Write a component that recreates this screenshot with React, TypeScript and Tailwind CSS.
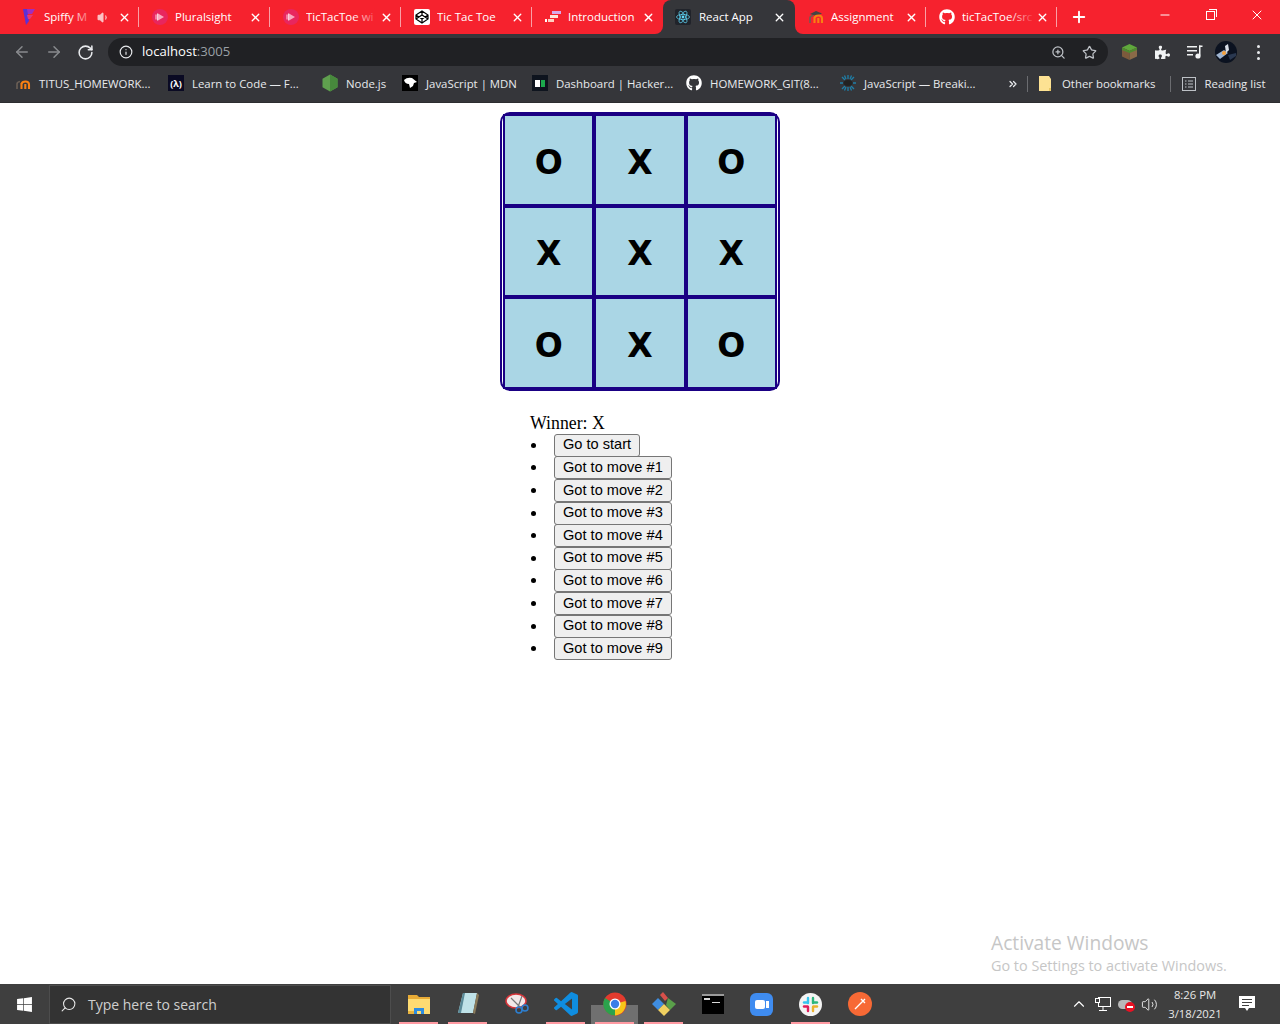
import { ArrowLeft, ArrowRight, ChevronUp, ChevronsRight, Info, Minus, Plus, RotateCw, Search, Star, Volume1, Volume2, X, ZoomIn } from 'lucide-react'
import { FaGithub, FaPuzzlePiece, FaWindows } from 'react-icons/fa'

const ui = "font-['Open_Sans','Noto_Sans',sans-serif]"

function PluralsightIcon() {
    return (
        <svg width="16" height="16" viewBox="0 0 16 16">
            <circle cx="8" cy="8" r="8" fill="#e8265e" />
            <path d="M6 4.5 L12 8 L6 11.5 Z" fill="#f9a8c0" />
            <path d="M4 5.5 V10.5 M5.5 4.5 V11.5" stroke="#fbd0dc" strokeWidth="1" />
        </svg>
    )
}

function SpiffyIcon() {
    return (
        <svg width="16" height="18" viewBox="0 0 16 18">
            <path d="M2 1 H14 L11 6 H5 Z" fill="#a02ec0" />
            <path d="M2 1 L5 17 L8 13 L6 1 Z" fill="#5b30d8" />
            <path d="M6 7 H12 L9 11 H7 Z" fill="#e23a78" />
        </svg>
    )
}

function CodepenIcon() {
    return (
        <svg width="16" height="16" viewBox="0 0 16 16">
            <rect width="16" height="16" rx="2" fill="#fff" />
            <path d="M8 2 L14 6 V10 L8 14 L2 10 V6 Z M2 6 L8 10 L14 6 M2 10 L8 6 L14 10 M8 2 V6 M8 10 V14" fill="none" stroke="#000" strokeWidth="1.2" />
        </svg>
    )
}

function StairsIcon() {
    return (
        <svg width="16" height="12" viewBox="0 0 16 12">
            <rect x="7" y="0" width="9" height="3" fill="#d9a8e8" />
            <rect x="5" y="4" width="8" height="3" fill="#ffe2d8" />
            <rect x="3" y="8" width="6" height="3" fill="#ffd0c0" />
            <rect x="0" y="8" width="2" height="3" fill="#fff" />
        </svg>
    )
}

function ReactIcon() {
    return (
        <svg width="16" height="16" viewBox="0 0 16 16">
            <rect width="16" height="16" rx="2" fill="#20232a" />
            <circle cx="8" cy="8" r="1.4" fill="#61dafb" />
            <g fill="none" stroke="#61dafb" strokeWidth="0.7">
                <ellipse cx="8" cy="8" rx="6.5" ry="2.6" />
                <ellipse cx="8" cy="8" rx="6.5" ry="2.6" transform="rotate(60 8 8)" />
                <ellipse cx="8" cy="8" rx="6.5" ry="2.6" transform="rotate(120 8 8)" />
            </g>
        </svg>
    )
}

function MoodleIcon({ cap = false }: { cap?: boolean }) {
    return (
        <svg width="16" height="14" viewBox="0 0 16 14">
            {cap && <path d="M2 4 L8 1 L14 3.5 L8 6 Z" fill="#444" />}
            <path d="M2 13 V8 Q2 6 5 5.5" fill="none" stroke="#6b5f55" strokeWidth="1.6" />
            <path d="M6.5 13 V7 M6.5 8 Q7 5.5 10.5 5.5 Q14 5.5 14 8.5 V13 M10.3 13 V8" fill="none" stroke="#f98012" strokeWidth="2.1" />
        </svg>
    )
}

function FccIcon() {
    return (
        <div className="flex h-4 w-4 items-center justify-center bg-[#0a0a23] text-[9px] font-bold text-white">
            (λ)
        </div>
    )
}

function NodeIcon() {
    return (
        <svg width="16" height="18" viewBox="0 0 16 18">
            <path d="M8 0.5 L15.5 4.7 V13.3 L8 17.5 L0.5 13.3 V4.7 Z" fill="#5fa04e" />
            <path d="M8 0.5 L15.5 4.7 V13.3 L8 17.5 Z" fill="#47893c" />
        </svg>
    )
}

function MdnIcon() {
    return (
        <svg width="16" height="16" viewBox="0 0 16 16">
            <rect width="16" height="16" fill="#000" />
            <path d="M2 5 Q5 2 10 3 L15 7 L12 8 L11 11 L8 13 L7 9 Q3 9 2 5 Z" fill="#fff" />
        </svg>
    )
}

function HackerRankIcon() {
    return (
        <div className="flex h-4 w-4 items-center justify-center gap-px bg-[#0e141e]">
            <div className="h-[7px] w-[5px] bg-white" />
            <div className="h-[7px] w-[4px] bg-[#1ba94c]" />
        </div>
    )
}

function CssTricksIcon() {
    return (
        <svg width="16" height="16" viewBox="0 0 16 16">
            <g stroke="#1f7fa8" strokeWidth="1.3">
                <path d="M8 0 V4 M8 12 V16 M0 8 H3 M13 8 H16 M2 2 L5 5 M14 2 L11 5 M2 14 L5 11 M14 14 L11 11 M4.5 0.5 L6 4 M11.5 0.5 L10 4 M4.5 15.5 L6 12 M11.5 15.5 L10 12" />
            </g>
            <ellipse cx="8" cy="8" rx="4.5" ry="3" fill="#222" />
        </svg>
    )
}

function FolderBookmark() {
    return (
        <svg width="13" height="15" viewBox="0 0 13 15">
            <path d="M0 0 H10 V0 L12 3 V15 H0 Z" fill="#fde293" />
            <path d="M10 15 V12 H12 V15 Z" fill="#e8c765" />
        </svg>
    )
}

function ReadingList() {
    return (
        <svg width="14" height="14" viewBox="0 0 14 14" fill="none" stroke="#bdc1c6" strokeWidth="1">
            <rect x="0.5" y="0.5" width="13" height="13" />
            <path d="M3 4 H4.5 M6 4 H11 M3 7 H4.5 M6 7 H11 M3 10 H4.5 M6 10 H11" />
        </svg>
    )
}

function MinecraftBlock() {
    return (
        <svg width="15" height="16" viewBox="0 0 15 16">
            <path d="M7.5 0 L15 3.5 L7.5 7 L0 3.5 Z" fill="#5fa83c" />
            <path d="M0 3.5 L7.5 7 V16 L0 12.5 Z" fill="#7c5a3c" />
            <path d="M15 3.5 L7.5 7 V16 L15 12.5 Z" fill="#8a6a48" />
            <path d="M0 3.5 L7.5 7 L15 3.5 V6 L7.5 9 L0 6 Z" fill="#4d8a30" />
        </svg>
    )
}

function QueueMusic() {
    return (
        <svg width="16" height="14" viewBox="0 0 16 14" fill="#f1f3f4">
            <rect x="0" y="1" width="10" height="1.5" />
            <rect x="0" y="5" width="10" height="1.5" />
            <rect x="0" y="9" width="6" height="1.5" />
            <rect x="12" y="0.5" width="1.5" height="10" />
            <rect x="12" y="0.5" width="3.5" height="1.5" />
            <circle cx="11" cy="11" r="2.6" />
        </svg>
    )
}

function Avatar() {
    return (
        <svg width="22" height="22" viewBox="0 0 22 22">
            <circle cx="11" cy="11" r="11" fill="#0b1220" />
            <path d="M1 14 L9 9 L13 12 L5 18 Z" fill="#9fb4d0" />
            <path d="M10 5 L13 3 L14 9 L11 12 Z" fill="#d9dfe8" />
            <circle cx="9" cy="12" r="2" fill="#f7a13c" />
            <path d="M13 14 L21 12 V15 L15 19 Z" fill="#2a3850" />
        </svg>
    )
}

const tabs = [
    { title: 'Spiffy M', icon: <SpiffyIcon />, sound: true, fade: true, sep: true },
    { title: 'Pluralsight', icon: <PluralsightIcon />, sep: true },
    { title: 'TicTacToe wi', icon: <PluralsightIcon />, fade: true, sep: true },
    { title: 'Tic Tac Toe', icon: <CodepenIcon />, sep: true },
    { title: 'Introduction', icon: <StairsIcon /> },
    { title: 'React App', icon: <ReactIcon />, active: true },
    { title: 'Assignment', icon: <MoodleIcon cap />, sep: true },
    { title: 'ticTacToe/src', icon: <FaGithub className="h-4 w-4 text-white" />, fade: true, sep: true },
]

const bookmarks = [
    { title: 'TITUS_HOMEWORK...', icon: <MoodleIcon />, width: 'w-[153px]' },
    { title: 'Learn to Code — F...', icon: <FccIcon />, width: 'w-[154px]' },
    { title: 'Node.js', icon: <NodeIcon />, width: 'w-[80px]' },
    { title: 'JavaScript | MDN', icon: <MdnIcon />, width: 'w-[130px]' },
    { title: 'Dashboard | Hacker...', icon: <HackerRankIcon />, width: 'w-[154px]' },
    { title: 'HOMEWORK_GIT(8...', icon: <FaGithub className="h-4 w-4 text-white" />, width: 'w-[154px]' },
    { title: 'JavaScript — Breaki...', icon: <CssTricksIcon />, width: 'w-[150px]' },
]

function Tab({ tab }: { tab: (typeof tabs)[number] }) {
    return (
        <div
            className={
                tab.active
                    ? 'relative flex h-[34px] w-[132px] items-center rounded-t-[8px] bg-[#35363a] pl-[12px] pr-[9px]'
                    : 'relative flex h-[34px] w-[131px] items-center pl-[13px] pr-[8px]'
            }
        >
            <div className="flex h-[18px] w-4 shrink-0 items-center justify-center">{tab.icon}</div>
            <div className={`relative min-w-0 flex-1 overflow-hidden whitespace-nowrap text-[11.5px] text-white ${tab.active ? 'ml-[8px]' : 'ml-[7px]'}`}>
                {tab.title}
                {tab.fade && (
                    <div className="absolute inset-y-0 right-0 w-[28px] bg-gradient-to-r from-transparent to-[#f6222e]" />
                )}
            </div>
            {tab.sound && <Volume1 className="mr-[8px] h-[13px] w-[13px] shrink-0 fill-[#fbc4c7] text-[#fbc4c7]" />}
            <X className="h-[13px] w-[13px] shrink-0 text-white" strokeWidth={2.5} />
            {tab.sep && <div className="absolute bottom-[7px] right-0 top-[7px] w-px bg-[#f9a0a6]" />}
            {tab.active && (
                <>
                    <div className="absolute bottom-0 left-[-8px] h-[8px] w-[8px] bg-[#35363a]">
                        <div className="h-full w-full rounded-br-[8px] bg-[#f6222e]" />
                    </div>
                    <div className="absolute bottom-0 right-[-8px] h-[8px] w-[8px] bg-[#35363a]">
                        <div className="h-full w-full rounded-bl-[8px] bg-[#f6222e]" />
                    </div>
                </>
            )}
        </div>
    )
}

function Board() {
    const cells = ['O', 'X', 'O', 'X', 'X', 'X', 'O', 'X', 'O']
    return (
        <div className="mt-[9px] h-[279px] w-[280px] rounded-[10px] border-2 border-[#1a0084] pl-px">
            <div className="grid h-[275px] w-[274px] grid-cols-3 grid-rows-3">
                {cells.map((value, i) => (
                    <div
                        key={i}
                        className="flex items-center justify-center border-2 border-[#1a0084] bg-[#aad6e5] pt-[5px] font-['DejaVu_Sans',sans-serif] text-[33px] font-bold text-black"
                    >
                        {value}
                    </div>
                ))}
            </div>
        </div>
    )
}

function History() {
    const moves = ['Go to start', 'Got to move #1', 'Got to move #2', 'Got to move #3', 'Got to move #4', 'Got to move #5', 'Got to move #6', 'Got to move #7', 'Got to move #8', 'Got to move #9']
    return (
        <div className="mt-[22px] w-[220px] pl-[30px]">
            <div className="font-['Liberation_Serif',serif] text-[17.8px] leading-[21px] text-black">Winner: X</div>
            <ul className="font-['Liberation_Sans',sans-serif] text-[14.6px]">
                {moves.map(label => (
                    <li key={label} className="flex h-[22.6px] items-center">
                        <div className="ml-[1px] h-[5px] w-[5px] rounded-full bg-black" />
                        <button className="ml-[18px] flex h-[23px] items-center rounded-[3px] border border-[#767676] bg-[#efefef] px-2 text-black">
                            {label}
                        </button>
                    </li>
                ))}
            </ul>
        </div>
    )
}

function TaskIcon({ children, running, active }: { children: React.ReactNode; running?: boolean; active?: boolean }) {
    return (
        <div className="relative flex h-[40px] w-[49px] items-center justify-center">
            {active && <div className="absolute inset-x-[1px] bottom-0 h-[19px] bg-[#707070]" />}
            <div className="relative flex items-center justify-center">{children}</div>
            {running && <div className="absolute inset-x-[5px] bottom-0 h-[2px] bg-[#ff9aa2]" />}
        </div>
    )
}

function Taskbar() {
    return (
        <footer className={`flex h-[40px] items-center bg-[#3f3f3f] text-white ${ui}`}>
            <div className="flex w-[49px] items-center justify-center">
                <FaWindows className="h-[17px] w-[17px] text-white" />
            </div>
            <div className="flex h-[39px] w-[342px] items-center border border-[#4d4d4d] bg-[#333333] pl-[10px]">
                <Search className="h-[17px] w-[17px] -scale-x-100 text-[#e8e8e8]" strokeWidth={1.5} />
                <span className="ml-[11px] text-[14px] text-[#cfcfcf]">Type here to search</span>
            </div>
            <div className="ml-[3px] flex">
                <TaskIcon running>
                    <svg width="22" height="19" viewBox="0 0 22 19">
                        <path d="M0 0 H9 L11 2 H22 V19 H0 Z" fill="#e8ab36" />
                        <path d="M0 4 H22 V19 H0 Z" fill="#fddb72" />
                        <path d="M6 19 V13 H16 V19 H13 V16 H9 V19 Z" fill="#2c8ce0" />
                        <rect x="0" y="16" width="6" height="3" fill="#e8b33e" />
                    </svg>
                </TaskIcon>
                <TaskIcon running>
                    <svg width="22" height="24" viewBox="0 0 22 24">
                        <path d="M6 1 H20 L16 21 H1 Z" fill="#bfe2e8" />
                        <path d="M6 1 L1 21 H4 L8 1 Z" fill="#5a8a98" />
                        <path d="M20 1 L16 21 L18 22 L22 3 Z" fill="#8a7a5a" />
                    </svg>
                </TaskIcon>
                <TaskIcon>
                    <svg width="24" height="24" viewBox="0 0 24 24">
                        <ellipse cx="11" cy="9" rx="10" ry="7" fill="#f2e8e8" stroke="#d8353a" strokeWidth="1.5" />
                        <path d="M6 6 L17 17 M17 4 L13 15" stroke="#777" strokeWidth="1.2" />
                        <circle cx="14" cy="18" r="3" fill="none" stroke="#2d7fd0" strokeWidth="1.6" />
                        <circle cx="20" cy="16" r="3" fill="none" stroke="#2d7fd0" strokeWidth="1.6" />
                    </svg>
                </TaskIcon>
                <TaskIcon running>
                    <svg width="24" height="24" viewBox="0 0 24 24" fill="#0f8de0">
                        <path d="M23.15 2.587L18.21.21a1.494 1.494 0 0 0-1.705.29l-9.46 8.63-4.12-3.128a.999.999 0 0 0-1.276.057L.327 7.261A1 1 0 0 0 .326 8.74L3.899 12 .326 15.26a1 1 0 0 0 .001 1.479L1.65 17.94a.999.999 0 0 0 1.276.057l4.12-3.128 9.46 8.63a1.492 1.492 0 0 0 1.704.29l4.942-2.377A1.5 1.5 0 0 0 24 20.06V3.939a1.5 1.5 0 0 0-.85-1.352zm-5.146 14.861L10.826 12l7.178-5.448v10.896z" />
                    </svg>
                </TaskIcon>
                <TaskIcon running active>
                    <svg width="24" height="24" viewBox="0 0 24 24">
                        <circle cx="12" cy="12" r="11.5" fill="#e33b2e" />
                        <path d="M12 12 L22.5 9 A11.5 11.5 0 0 1 12 23.5 Z" fill="#f7c518" />
                        <path d="M12 12 L12 23.5 A11.5 11.5 0 0 1 2 6 Z" fill="#2ba24c" />
                        <circle cx="12" cy="12" r="5.5" fill="#fff" />
                        <circle cx="12" cy="12" r="4.2" fill="#3b7de8" />
                    </svg>
                </TaskIcon>
                <TaskIcon running>
                    <svg width="24" height="24" viewBox="0 0 24 24">
                        <path d="M0 12 L6 6 L12 12 L6 18 Z" fill="#3f8de0" />
                        <path d="M8 3 L11 0 L16 6 L13 9 Z" fill="#d8504a" />
                        <path d="M16 6 L24 12 L18 18 L14 13 Z" fill="#5aa04a" />
                        <path d="M6 18 L12 12 L18 18 L12 24 Z" fill="#f0d060" />
                    </svg>
                </TaskIcon>
                <TaskIcon>
                    <div className="h-[20px] w-[22px] border-t-2 border-[#9a9a9a] bg-black pl-[2px] pt-[2px]">
                        <div className="h-[2px] w-[6px] bg-[#d8d8d8]" />
                        <div className="ml-[8px] mt-[2px] h-px w-[8px] bg-[#d8d8d8]" />
                    </div>
                </TaskIcon>
                <TaskIcon>
                    <div className="flex h-[23px] w-[23px] items-center justify-center gap-px rounded-[6px] bg-[#3f8cf0]">
                        <div className="h-[9px] w-[10px] rounded-[2px] bg-white" />
                        <div className="h-[7px] w-[3px] bg-white" />
                    </div>
                </TaskIcon>
                <TaskIcon running>
                    <svg width="23" height="23" viewBox="0 0 23 23">
                        <circle cx="11.5" cy="11.5" r="11.5" fill="#f4f4f4" />
                        <g strokeWidth="2.4" strokeLinecap="round">
                            <path d="M9 5 V10" stroke="#36c5f0" />
                            <path d="M5 9.5 H8" stroke="#36c5f0" />
                            <path d="M14 5 V10" stroke="#2eb67d" />
                            <path d="M14.5 9.5 H18" stroke="#2eb67d" />
                            <path d="M14 14 V18" stroke="#ecb22e" />
                            <path d="M14.5 13.5 H18" stroke="#ecb22e" />
                            <path d="M9 14 V18" stroke="#e01e5a" />
                            <path d="M5 13.5 H8.5" stroke="#e01e5a" />
                        </g>
                    </svg>
                </TaskIcon>
                <TaskIcon>
                    <svg width="24" height="24" viewBox="0 0 24 24">
                        <circle cx="12" cy="12" r="12" fill="#f76935" />
                        <path d="M7 17 L17 7 M13 7 L17 11" stroke="#fff" strokeWidth="1.4" fill="none" />
                    </svg>
                </TaskIcon>
            </div>
            <div className="ml-auto flex items-center">
                <ChevronUp className="h-[18px] w-[18px] text-white" strokeWidth={1.5} />
                <svg className="ml-[7px]" width="16" height="14" viewBox="0 0 16 14" fill="none" stroke="#fff">
                    <rect x="3.5" y="0.5" width="12" height="9" />
                    <path d="M8 10 V13 M4 13.5 H12" />
                    <rect x="0.5" y="1.5" width="4" height="4" fill="#3f3f3f" />
                </svg>
                <div className="relative ml-[7px] h-[16px] w-[17px]">
                    <div className="absolute left-0 top-[4px] h-[9px] w-[14px] rounded-full bg-[#b8b8b8]" />
                    <div className="absolute bottom-0 right-0 flex h-[10px] w-[10px] items-center justify-center rounded-full bg-[#e81123]">
                        <div className="h-[2px] w-[6px] bg-white" />
                    </div>
                </div>
                <Volume2 className="ml-[6px] h-[17px] w-[17px] text-white" strokeWidth={1.2} />
                <div className="ml-[7px] flex w-[60px] flex-col items-center text-[11.3px] leading-[19px] text-[#e8e8e8]">
                    <span>8:26 PM</span>
                    <span>3/18/2021</span>
                </div>
                <svg className="ml-[14px] mr-[25px]" width="16" height="16" viewBox="0 0 16 16">
                    <path d="M0 0 H16 V12 H10 L8 15 L6 12 H0 Z" fill="#fff" />
                    <path d="M3 3.5 H13 M3 6.5 H13 M3 9.5 H10" stroke="#3f3f3f" />
                </svg>
            </div>
        </footer>
    )
}

export default function App() {
    return (
        <div className="flex h-[1024px] flex-col overflow-hidden bg-white">
            <div className={`${ui} text-[#e8eaed]`}>
                <div className="relative flex h-[34px] items-start bg-[#f6222e] pl-[8px]">
                    {tabs.map(tab => (
                        <Tab key={tab.title} tab={tab} />
                    ))}
                    <Plus className="ml-[13px] mt-[8px] h-[18px] w-[18px] text-white" strokeWidth={2.5} />
                    <div className="ml-auto flex h-[30px] text-white">
                        <div className="flex w-[46px] items-center justify-center"><Minus className="h-[14px] w-[14px]" strokeWidth={1.7} /></div>
                        <div className="mr-px flex w-[45px] items-center justify-center">
                            <div className="relative h-[9px] w-[9px] border border-white">
                                <div className="absolute -right-[3px] -top-[3px] h-[8px] w-[8px] border-r border-t border-white" />
                            </div>
                        </div>
                        <div className="flex w-[46px] items-center justify-center"><X className="h-[16px] w-[16px]" strokeWidth={1.5} /></div>
                    </div>
                </div>
                <div className="flex h-[33px] items-center bg-[#35363a] pl-[13px] pt-[3px]">
                    <ArrowLeft className="h-[18px] w-[18px] text-[#898b8e]" strokeWidth={2} />
                    <ArrowRight className="ml-[14px] h-[18px] w-[18px] text-[#898b8e]" strokeWidth={2} />
                    <RotateCw className="ml-[14px] h-[17px] w-[17px] text-[#e8eaed]" strokeWidth={2.2} />
                    <div className="ml-[14px] flex h-[28px] w-[1000px] items-center rounded-full bg-[#202124] pl-[11px] pr-[10px]">
                        <Info className="h-[14px] w-[14px] text-[#e8eaed]" strokeWidth={2} />
                        <span className="ml-[9px] text-[13.1px] text-white">localhost<span className="text-[#9aa0a6]">:3005</span></span>
                        <ZoomIn className="ml-auto h-[15px] w-[15px] text-[#bdc1c6]" strokeWidth={2} />
                        <Star className="ml-[16px] mr-[1px] h-[15px] w-[15px] text-[#bdc1c6]" strokeWidth={2} />
                    </div>
                    <div className="ml-[14px] flex items-center">
                        <MinecraftBlock />
                        <FaPuzzlePiece className="ml-[18px] h-[15px] w-[15px] text-[#f1f3f4]" />
                        <div className="ml-[17px]"><QueueMusic /></div>
                        <div className="ml-[12px]"><Avatar /></div>
                        <div className="ml-[20px] flex flex-col gap-[3px]">
                            <div className="h-[3px] w-[3px] rounded-full bg-[#e8eaed]" />
                            <div className="h-[3px] w-[3px] rounded-full bg-[#e8eaed]" />
                            <div className="h-[3px] w-[3px] rounded-full bg-[#e8eaed]" />
                        </div>
                    </div>
                </div>
                <div className="flex h-[36px] items-center border-b border-[#2c2d30] bg-[#35363a] pb-[2px] pl-[15px] text-[11.4px] text-[#e8eaed]">
                    {bookmarks.map(b => (
                        <div key={b.title} className={`flex items-center whitespace-nowrap ${b.width}`}>
                            <div className="flex h-4 w-4 items-center justify-center">{b.icon}</div>
                            <span className="ml-[8px]">{b.title}</span>
                        </div>
                    ))}
                    <ChevronsRight className="ml-[17px] h-[12px] w-[12px] text-[#e8eaed]" strokeWidth={2.5} />
                    <div className="ml-[8px] h-[16px] w-px bg-[#6b6c70]" />
                    <div className="ml-[11px]"><FolderBookmark /></div>
                    <span className="ml-[10px]">Other bookmarks</span>
                    <div className="ml-[14px] h-[16px] w-px bg-[#6b6c70]" />
                    <div className="ml-[11px]"><ReadingList /></div>
                    <span className="ml-[9px]">Reading list</span>
                </div>
            </div>
            <main className="relative flex flex-1 flex-col items-center">
                <Board />
                <div className="w-[280px]">
                    <History />
                </div>
                <div className={`absolute bottom-[8px] left-[991px] ${ui} text-[#c6c6c6]`}>
                    <div className="text-[19.2px] leading-[26px]">Activate Windows</div>
                    <div className="text-[14.4px] leading-[20px]">Go to Settings to activate Windows.</div>
                </div>
            </main>
            <Taskbar />
        </div>
    )
}
